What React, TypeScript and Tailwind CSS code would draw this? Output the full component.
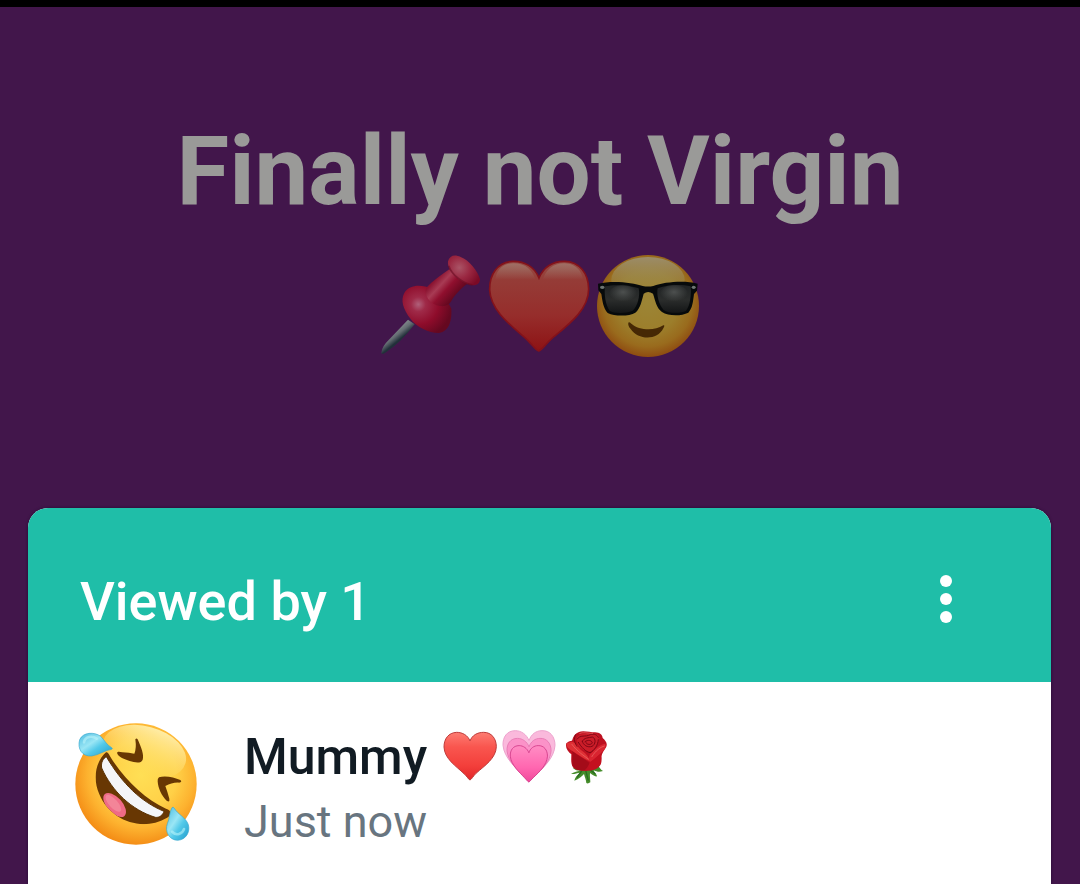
const STATUS = {
  text: 'Finally not Virgin',
  viewers: [{ name: 'Mummy', time: 'Just now' }],
}

function PushpinEmoji() {
  return (
    <svg viewBox="24 0 324 360" className="w-27 h-30" role="img" aria-label="pushpin">
      <defs>
        <linearGradient id="pinNeedle" x1="70" y1="262" x2="88" y2="284" gradientUnits="userSpaceOnUse">
          <stop offset="0" stopColor="#7d8488" />
          <stop offset="0.45" stopColor="#646c72" />
          <stop offset="1" stopColor="#22303a" />
        </linearGradient>
        <radialGradient id="pinBase" cx="145" cy="178" r="100" gradientUnits="userSpaceOnUse">
          <stop offset="0" stopColor="#b0607a" />
          <stop offset="0.22" stopColor="#9f2a48" />
          <stop offset="0.6" stopColor="#8f0c2b" />
          <stop offset="1" stopColor="#650820" />
        </radialGradient>
        <linearGradient id="pinNeck" x1="190" y1="110" x2="250" y2="165" gradientUnits="userSpaceOnUse">
          <stop offset="0" stopColor="#8a1230" />
          <stop offset="0.28" stopColor="#a83b54" />
          <stop offset="0.55" stopColor="#900f2e" />
          <stop offset="1" stopColor="#60071e" />
        </linearGradient>
        <radialGradient id="pinCap" cx="268" cy="68" r="66" gradientUnits="userSpaceOnUse">
          <stop offset="0" stopColor="#aa5466" />
          <stop offset="0.5" stopColor="#9a2741" />
          <stop offset="1" stopColor="#7b0a26" />
        </radialGradient>
      </defs>
      <path d="M114 224 L134 238 Q92 294 46 323 Q34 330 34 323 Q36 304 56 285 Z" fill="url(#pinNeedle)" />
      <path
        d="M103 144 C117 116 157 119 183 129 C212 148 236 171 244 191 C246 224 239 258 207 264 C180 265 139 247 122 222 C99 193 91 165 103 144 Z"
        fill="url(#pinBase)"
      />
      <path d="M238 73 C214 90 188 108 168 129 C161 151 180 179 211 183 C226 185 238 180 244 168 C253 150 273 130 292 116 Z" fill="url(#pinNeck)" />
      <path
        d="M234 49 C239 31 254 27 272 36 C297 45 324 78 330 103 C329 121 313 125 292 117 C266 109 231 78 234 49 Z"
        fill="url(#pinCap)"
      />
      <path d="M236 62 C246 91 280 116 307 120" fill="none" stroke="#65091f" strokeWidth="5" opacity="0.55" />
    </svg>
  )
}

function DimHeartEmoji() {
  return (
    <svg viewBox="18 0 324 360" className="w-27 h-30" role="img" aria-label="red heart">
      <defs>
        <linearGradient id="dimHeart" x1="0" y1="50" x2="0" y2="320" gradientUnits="userSpaceOnUse">
          <stop offset="0" stopColor="#954b44" />
          <stop offset="0.2" stopColor="#953c37" />
          <stop offset="0.6" stopColor="#962d2b" />
          <stop offset="1" stopColor="#8d1214" />
        </linearGradient>
        <linearGradient id="dimHeartShine" x1="0" y1="52" x2="0" y2="104" gradientUnits="userSpaceOnUse">
          <stop offset="0" stopColor="#a07267" />
          <stop offset="1" stopColor="#a07267" stopOpacity="0" />
        </linearGradient>
      </defs>
      <path
        d="M177 99 C164 66 134 48 98 49 C53 51 28 88 29 135 C32 196 91 240 137 280 C157 299 166 315 176 318 C188 314 195 298 216 280 C267 238 326 194 326 132 C325 84 298 50 254 49 C219 48 190 67 177 99 Z"
        fill="url(#dimHeart)"
        stroke="#83121b"
        strokeWidth="5"
      />
      <path d="M46 118 C43 81 64 56 99 55 C134 54 158 74 166 105 Q106 114 46 118 Z" fill="url(#dimHeartShine)" />
      <path d="M188 105 C197 74 221 54 254 55 C290 56 312 84 310 118 Z" fill="url(#dimHeartShine)" />
    </svg>
  )
}

function SunglassesEmoji() {
  return (
    <svg viewBox="18 0 324 360" className="w-27 h-30" role="img" aria-label="smiling face with sunglasses">
      <defs>
        <radialGradient id="coolFace" cx="180" cy="170" r="168" gradientUnits="userSpaceOnUse">
          <stop offset="0" stopColor="#9c8536" />
          <stop offset="0.55" stopColor="#9c7e2b" />
          <stop offset="0.8" stopColor="#996b1d" />
          <stop offset="1" stopColor="#8e4a10" />
        </radialGradient>
        <linearGradient id="coolShine" x1="0" y1="38" x2="0" y2="160" gradientUnits="userSpaceOnUse">
          <stop offset="0" stopColor="#9b8c68" />
          <stop offset="1" stopColor="#9c8b47" stopOpacity="0" />
        </linearGradient>
        <linearGradient id="coolLens" x1="0" y1="120" x2="0" y2="208" gradientUnits="userSpaceOnUse">
          <stop offset="0" stopColor="#202324" />
          <stop offset="0.5" stopColor="#2b2d2c" />
          <stop offset="1" stopColor="#111314" />
        </linearGradient>
        <radialGradient id="coolGlare" cx="0.5" cy="0.4" r="0.5">
          <stop offset="0" stopColor="#4d504f" />
          <stop offset="1" stopColor="#4d504f" stopOpacity="0" />
        </radialGradient>
      </defs>
      <circle cx="180" cy="183" r="153" fill="url(#coolFace)" />
      <ellipse cx="180" cy="105" rx="110" ry="69" fill="url(#coolShine)" />
      <path
        d="M30 116 C72 106 134 112 164 123 Q180 126 196 123 C231 110 291 106 329 116 L327 137 L318 147 C315 169 314 189 301 203 C279 214 240 213 222 201 C205 188 202 167 195 146 Q180 136 167 146 C161 167 158 189 142 203 C124 214 82 215 59 204 C45 189 43 165 40 147 L31 136 Z"
        fill="#070a0b"
      />
      <path d="M51 124 C82 117 123 121 152 130 C157 151 149 184 134 197 C113 206 78 206 65 197 C52 182 48 144 51 124 Z" fill="url(#coolLens)" />
      <path d="M209 130 C241 119 279 118 308 124 C311 146 306 184 294 197 C278 206 242 206 227 195 C213 180 205 151 209 130 Z" fill="url(#coolLens)" />
      <ellipse cx="105" cy="147" rx="42" ry="28" fill="url(#coolGlare)" />
      <ellipse cx="258" cy="147" rx="42" ry="28" fill="url(#coolGlare)" />
      <ellipse cx="43" cy="127" rx="7" ry="5" fill="#6e7573" />
      <ellipse cx="317" cy="127" rx="6" ry="5" fill="#6e7573" />
      <path
        d="M121 233 Q119 242 128 252 C151 286 208 287 226 250 Q232 239 226 241 C198 259 153 256 130 236 Q123 230 121 233 Z"
        fill="#462804"
      />
    </svg>
  )
}

function RoflEmoji() {
  return (
    <svg viewBox="0 0 420 420" className="size-35 shrink-0" role="img" aria-label="rolling on the floor laughing">
      <defs>
        <radialGradient id="roflFace" cx="225" cy="180" r="215" gradientUnits="userSpaceOnUse">
          <stop offset="0" stopColor="#ffdf55" />
          <stop offset="0.5" stopColor="#ffd047" />
          <stop offset="0.75" stopColor="#fdb22f" />
          <stop offset="1" stopColor="#f38a14" />
        </radialGradient>
        <linearGradient id="roflShine" x1="240" y1="32" x2="220" y2="170" gradientUnits="userSpaceOnUse">
          <stop offset="0" stopColor="#ffeda6" />
          <stop offset="1" stopColor="#ffe36a" stopOpacity="0" />
        </linearGradient>
        <linearGradient id="roflTear" x1="0" y1="0" x2="1" y2="1">
          <stop offset="0" stopColor="#4bbbe0" />
          <stop offset="0.4" stopColor="#9ae6f5" />
          <stop offset="0.6" stopColor="#52c9e9" />
          <stop offset="1" stopColor="#209dcd" />
        </linearGradient>
        <clipPath id="roflMouth">
          <path d="M120 112 C89 140 79 190 100 238 C131 314 225 353 302 309 C318 300 317 285 300 281 C238 252 177 197 132 124 Q125 109 120 112 Z" />
        </clipPath>
      </defs>
      <circle cx="210" cy="207" r="182" fill="url(#roflFace)" />
      <ellipse cx="235" cy="111" rx="128" ry="77" transform="rotate(15 235 111)" fill="url(#roflShine)" />
      <g clipPath="url(#roflMouth)">
        <rect x="75" y="100" width="250" height="240" fill="#683703" />
        <ellipse cx="146" cy="270" rx="44" ry="23" transform="rotate(48 146 270)" fill="#ef6b86" />
        <ellipse cx="142" cy="265" rx="32" ry="13" transform="rotate(48 142 265)" fill="#f38598" />
      </g>
      <path
        d="M121 125 C112 130 104 142 107 159 C138 229 197 285 268 307 C281 309 291 299 294 289 C226 261 169 207 121 125 Z"
        fill="#f4f5f8"
        stroke="#5b3305"
        strokeWidth="3"
      />
      <path
        d="M208 73 Q213 67 217 77 C225 97 235 118 230 134 C226 146 207 143 191 138 C175 132 158 126 154 116 C151 109 160 110 169 112 Q190 113 205 116 Q212 100 208 73 Z"
        fill="#683703"
      />
      <path
        d="M279 187 C296 180 325 187 343 195 Q350 202 339 203 C324 202 312 207 298 213 Q305 232 310 251 Q312 264 302 257 C287 243 276 219 275 199 Q274 191 279 187 Z"
        fill="#683703"
      />
      <path
        d="M137 98 C122 90 115 75 104 64 C85 50 51 51 41 74 C33 102 49 125 77 123 C100 120 117 105 137 103 Q141 101 137 98 Z"
        fill="url(#roflTear)"
        stroke="#39a9cf"
        strokeWidth="2"
      />
      <path d="M54 82 C57 64 79 61 92 71" fill="none" stroke="#baf4fa" strokeWidth="8" strokeLinecap="round" opacity="0.6" />
      <path
        d="M318 278 C309 294 311 312 304 326 C296 349 309 375 335 376 C361 374 373 350 367 329 C361 309 334 297 325 280 Q321 274 318 278 Z"
        fill="url(#roflTear)"
        stroke="#39a9cf"
        strokeWidth="2"
      />
      <path d="M318 350 C330 364 350 357 354 342" fill="none" stroke="#b5f3fa" strokeWidth="8" strokeLinecap="round" opacity="0.6" />
    </svg>
  )
}

function HeartEmoji() {
  return (
    <svg viewBox="18 0 177 210" className="w-[59px] h-[70px]" role="img" aria-label="red heart">
      <defs>
        <linearGradient id="heartFill" x1="0" y1="38" x2="0" y2="180" gradientUnits="userSpaceOnUse">
          <stop offset="0" stopColor="#fd7b71" />
          <stop offset="0.3" stopColor="#f9564f" />
          <stop offset="0.7" stopColor="#f33f3b" />
          <stop offset="1" stopColor="#e2262a" />
        </linearGradient>
      </defs>
      <path
        d="M105 63 C99 46 82 37 65 37 C40 38 27 57 27 81 C28 116 64 139 87 161 C97 170 101 179 105 180 C110 178 114 169 123 160 C149 137 183 115 184 80 C184 55 169 37 146 37 C127 37 111 46 105 63 Z"
        fill="url(#heartFill)"
        stroke="#be3c3b"
        strokeWidth="3"
      />
    </svg>
  )
}

const HEART_PATH =
  'M282 62 C275 43 258 32 241 32 C216 32 203 51 204 76 C207 113 244 145 263 166 C272 175 278 184 282 185 C287 182 292 174 302 165 C326 142 358 113 360 76 C360 50 345 31 321 32 C303 32 288 43 282 62 Z'

function GrowingHeartEmoji() {
  return (
    <svg viewBox="195 0 177 210" className="w-[59px] h-[70px]" role="img" aria-label="growing heart">
      <defs>
        <linearGradient id="growFill" x1="0" y1="32" x2="0" y2="185" gradientUnits="userSpaceOnUse">
          <stop offset="0" stopColor="#ff8dc4" />
          <stop offset="0.6" stopColor="#ff67b0" />
          <stop offset="1" stopColor="#f0489a" />
        </linearGradient>
      </defs>
      <path d={HEART_PATH} fill="#fab9dc" stroke="#eda2cd" strokeWidth="3" />
      <path d={HEART_PATH} fill="#fb92c8" stroke="#e577b1" strokeWidth="3" transform="translate(43 28) scale(0.848)" />
      <path d={HEART_PATH} fill="url(#growFill)" stroke="#d6428e" strokeWidth="4" transform="translate(80 54) scale(0.715)" />
    </svg>
  )
}

function RoseEmoji() {
  return (
    <svg viewBox="372 0 177 210" className="w-[59px] h-[70px]" role="img" aria-label="rose">
      <path
        d="M413 143 C421 151 428 153 438 151 C430 155 415 156 408 162 C419 163 427 159 434 158 C426 166 420 172 418 182 C432 177 441 168 447 162 C449 171 453 179 454 189 Q459 192 466 187 C466 177 464 169 465 159 C474 166 482 170 486 169 C486 163 477 157 476 151 C486 156 494 157 504 153 C496 149 493 139 486 135 Z"
        fill="#458c2b"
      />
      <path d="M440 153 L426 173 M452 151 L460 182 M467 151 L481 162" fill="none" stroke="#296d20" strokeWidth="4" />
      <path
        d="M432 36 C443 30 466 37 480 37 C495 38 502 44 503 54 C512 62 518 70 514 80 C508 91 501 98 499 109 C501 128 495 140 481 148 C459 156 431 154 417 145 C406 135 409 116 409 103 C398 94 390 82 394 70 Q402 61 411 62 C415 48 421 40 432 36 Z"
        fill="#bd1020"
      />
      <path d="M411 65 C423 67 428 82 442 93 C454 102 462 112 465 124 C447 117 428 103 412 93 C398 85 391 76 396 69 Z" fill="#df3035" />
      <path d="M511 71 C491 73 477 91 464 104 C461 113 462 121 465 126 C480 119 488 108 498 99 C509 89 515 81 511 71 Z" fill="#d92430" />
      <path d="M412 94 C430 108 451 119 464 129 C459 139 454 147 449 151 C430 153 417 147 412 135 Z" fill="#a40b19" />
      <path d="M499 101 C486 108 475 119 464 129 Q461 140 465 151 C485 149 499 138 499 125 Z" fill="#c4101f" />
      <path d="M425 55 C430 39 454 42 475 40 C490 41 496 49 492 60 C487 75 482 89 466 95 C449 95 430 82 427 70 Z" fill="#cb1d29" />
      <path
        d="M427 57 C435 43 451 52 466 44 C478 40 487 45 490 52 M430 67 C439 82 453 96 465 98 C477 93 489 76 490 59 M442 64 C447 52 461 54 472 51 C484 55 482 74 471 79 C458 84 444 75 442 64 M450 65 C459 58 471 61 472 69 C468 75 455 75 453 68 M422 44 C414 57 420 70 426 79"
        fill="none"
        stroke="#7f0714"
        strokeWidth="3"
        strokeLinecap="round"
      />
      <path d="M433 41 C443 35 456 40 474 40 M410 72 C426 95 449 108 461 118 M470 111 C482 91 497 81 509 78" fill="none" stroke="#ed6966" strokeWidth="3" opacity="0.7" />
    </svg>
  )
}

function App() {
  return (
    <div className="min-h-screen flex flex-col border-t-7 border-black bg-[#42164b] font-[Roboto,sans-serif]">
      <section className="flex flex-col items-center gap-[18px] pt-27 pb-[143px]">
        <h1 className="text-[96px] leading-[112px] font-bold text-[#9a9a98] text-center">{STATUS.text}</h1>
        <div className="flex">
          <PushpinEmoji />
          <DimHeartEmoji />
          <SunglassesEmoji />
        </div>
      </section>

      <main className="flex-1 flex flex-col ml-7 mr-[29px] rounded-t-[20px] overflow-hidden bg-white shadow-[0_0_3px_#230b32]">
        <header className="flex items-end justify-between bg-[#1fbea8] pl-[52px] pr-[81px] pt-14 pb-12 text-white">
          <h2 className="text-[54px] leading-16 font-medium">Viewed by {STATUS.viewers.length}</h2>
          <button type="button" aria-label="More options" className="h-[70px] w-12 flex items-center justify-center">
            <svg viewBox="0 0 16 50" className="w-4 h-[50px]" fill="currentColor">
              <circle cx="8" cy="7" r="6" />
              <circle cx="8" cy="25" r="6" />
              <circle cx="8" cy="43" r="6" />
            </svg>
          </button>
        </header>

        <ul className="pt-[33px] pl-[38px]">
          {STATUS.viewers.map((viewer) => (
            <li key={viewer.name} className="flex items-center gap-[38px]">
              <RoflEmoji />
              <div>
                <div className="flex items-start gap-[14px]">
                  <h3 className="text-[50px] leading-[74px] font-medium text-[#111b23]">{viewer.name}</h3>
                  <div className="flex">
                    <HeartEmoji />
                    <GrowingHeartEmoji />
                    <RoseEmoji />
                  </div>
                </div>
                <p className="text-[45px] leading-14 text-[#687580]">{viewer.time}</p>
              </div>
            </li>
          ))}
        </ul>
      </main>
    </div>
  )
}

export default App
